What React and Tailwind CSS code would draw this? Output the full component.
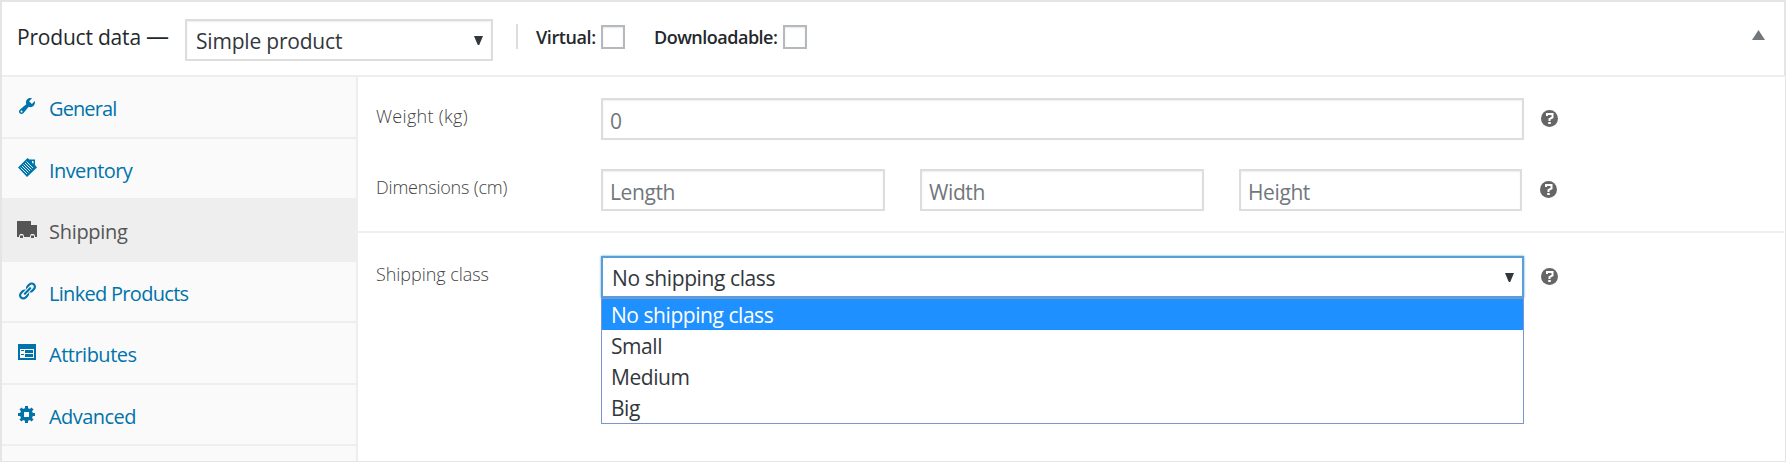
import React, { useState } from 'react';

const toolsPath =
  'M16.68 9.77a4.543 4.543 0 0 1-4.95.99l-5.41 6.52c-.99.99-2.59.99-3.58 0s-.99-2.59 0-3.57l6.52-5.42c-.68-1.65-.35-3.61.99-4.95 1.28-1.28 3.12-1.62 4.72-1.06l-2.89 2.89 2.82 2.82 2.86-2.87c.53 1.58.18 3.39-1.08 4.65zM3.81 16.21c.4.39 1.04.39 1.43 0 .4-.4.4-1.04 0-1.43-.39-.4-1.03-.4-1.43 0a1.02 1.02 0 0 0 0 1.43z';
const linkPath =
  'M17.74 2.76a4.321 4.321 0 0 1 0 6.1l-1.53 1.52c-1.12 1.12-2.7 1.47-4.14 1.09l2.62-2.61.76-.77.76-.76c.84-.84.84-2.2 0-3.04a2.13 2.13 0 0 0-3.04 0l-.77.76-3.38 3.38c-.37-1.44-.02-3.02 1.1-4.14l1.52-1.53a4.321 4.321 0 0 1 6.1 0zM8.59 13.43l5.34-5.34c.42-.42.42-1.1 0-1.52-.44-.43-1.13-.39-1.53 0l-5.33 5.34c-.42.42-.42 1.1 0 1.52.44.43 1.13.39 1.52 0zm-.76 2.29l4.14-4.15c.38 1.44.03 3.02-1.09 4.14l-1.52 1.53a4.321 4.321 0 0 1-6.1 0 4.321 4.321 0 0 1 0-6.1l1.53-1.52c1.12-1.12 2.7-1.47 4.14-1.1l-4.14 4.15c-.85.84-.85 2.2 0 3.05.84.84 2.2.84 3.04 0z';
const gearPath =
  'M18 12h-2.18c-.17.7-.44 1.35-.81 1.93l1.54 1.54-2.1 2.1-1.54-1.54c-.58.36-1.23.63-1.91.79V19H8v-2.18c-.68-.16-1.33-.43-1.91-.79l-1.54 1.54-2.12-2.12 1.54-1.54c-.36-.58-.63-1.23-.79-1.91H1V9.03h2.17c.16-.7.44-1.35.8-1.94L2.43 5.55l2.1-2.1 1.54 1.54c.58-.37 1.24-.64 1.93-.81V2h3v2.18c.68.16 1.33.43 1.91.79l1.54-1.54 2.12 2.12-1.54 1.54c.36.59.64 1.24.8 1.94H18V12zM7 8v5h5V8z';

const icons = {
  tools: <path fillRule="evenodd" d={toolsPath} />,
  link: <path d={linkPath} />,
  gear: <path fillRule="evenodd" d={gearPath} />,
  ticket: (
    <>
      <path fillRule="evenodd" d="M10.500 0l2 1.500h5.500v5.500l2 2.500-10 9.500-9-9.500zM15 3v1.500l1.500 1.500V3z" />
      <path
        d="M3.500 9.500l6.500 6.500M5 8l6.500 6.500M6.500 6.500l6.500 6.500M8 5l6.500 6.500M9.500 3.500l6.500 6.500"
        fill="none"
        stroke="#fafafa"
        strokeWidth="0.9"
      />
    </>
  ),
  truck: (
    <>
      <path d="M0 2h14v4h6v12H0z" />
      <path d="M2 18v-1l1-2h3l1 2v1zM13 18v-1l1-2h3l1 2v1z" fill="#eee" />
      <path d="M3 16.500h3V19H3zM14 16.500h3V19h-3z" />
    </>
  ),
  list: (
    <path
      fillRule="evenodd"
      d="M1 2h18v16H1zM3 7v9h14V7zM4 8h3v1H4zM8 8h8v3H8zM4 12h3v1H4zM8 12h8v3H8z"
    />
  ),
};

const tabs = [
  { id: 'general', label: 'General', icon: 'tools', size: 'h-[62px] border-b-2', text: 'tracking-[-0.9px]' },
  { id: 'inventory', label: 'Inventory', icon: 'ticket', size: 'h-[59px]', text: 'tracking-[-0.6px]' },
  { id: 'shipping', label: 'Shipping', icon: 'truck', size: 'h-[64px] pt-[2px]', text: 'tracking-[-0.3px]' },
  { id: 'linked', label: 'Linked Products', icon: 'link', size: 'h-[61px] border-b-2', text: 'tracking-[-0.7px]' },
  { id: 'attributes', label: 'Attributes', icon: 'list', size: 'h-[62px] border-b-2', text: 'tracking-[-0.5px]' },
  { id: 'advanced', label: 'Advanced', icon: 'gear', size: 'h-[61px] border-b-2', text: 'tracking-[-0.55px]' },
];

const shippingClasses = ['No shipping class', 'Small', 'Medium', 'Big'];

function Arrow() {
  return (
    <svg width="9" height="9" viewBox="0 0 9 9" fill="#32373c">
      <path d="M0 0h9L5.2 9H3.8z" />
    </svg>
  );
}

function HelpTip({ className }) {
  return (
    <svg className={className} width="17" height="17" viewBox="0 0 17 17">
      <circle cx="8.5" cy="8.5" r="8.5" fill="#666" />
      <path d="M6 6V4h5.500v3.500L8.500 9v2M7.200 13h2.600" fill="none" stroke="#fff" strokeWidth="2" />
    </svg>
  );
}

function Tab({ tab, active, onClick }) {
  return (
    <li
      onClick={onClick}
      className={`flex cursor-pointer border-[#eee] pl-[15px] ${tab.size} ${active ? 'bg-[#eee] text-[#555]' : 'text-[#0073aa]'}`}
    >
      <svg className="mt-[19px] shrink-0" width="20" height="20" viewBox="0 0 20 20" fill="currentColor">
        {icons[tab.icon]}
      </svg>
      <span className={`ml-3 pt-[18px] text-[20px] leading-[28px] ${tab.text}`}>{tab.label}</span>
    </li>
  );
}

function Field({ placeholder, className }) {
  return (
    <input
      type="text"
      placeholder={placeholder}
      className={`h-[42px] border-2 border-[#ddd] bg-white pt-[3px] pr-2 pl-[7px] text-[21px] tracking-[-0.4px] shadow-[inset_0_1px_2px_rgba(0,0,0,0.07)] outline-none placeholder:text-[#72777c] ${className}`}
    />
  );
}

function App() {
  const [current, setCurrent] = useState('shipping');
  const [shippingClass, setShippingClass] = useState(shippingClasses[0]);

  return (
    <div className="flex h-[462px] w-[1786px] flex-col overflow-hidden border-t-2 border-b border-l-2 border-[#e5e5e5] bg-white font-['Open_Sans',sans-serif] text-[#23282d]">
      {/* Header */}
      <div className="flex h-[75px] shrink-0 items-start border-r-2 border-b-2 border-r-[#e5e5e5] border-b-[#eee] pl-[15px]">
        <h2 className="w-[168px] pt-[19px] text-[21px] leading-[30px] whitespace-nowrap tracking-[-0.2px]">
          Product data <span className="text-[23px]">—</span>
        </h2>
        <div className="mt-[17px] flex h-[42px] w-[308px] items-center justify-between border-2 border-[#ddd] pr-2 pl-[9px] text-[#32373c] shadow-[inset_0_1px_2px_rgba(0,0,0,0.07)]">
          <span className="pt-[2px] text-[21px] leading-[30px] tracking-[-0.2px]">Simple product</span>
          <Arrow />
        </div>
        <div className="mt-[22px] ml-[23px] h-[25px] w-[2px] bg-[#ddd]" />
        <label className="ml-[18px] flex w-[118px] pt-[23px] text-[18px] leading-[25px] font-semibold">
          <span className="w-[65px] whitespace-nowrap tracking-[-0.4px]">Virtual:</span>
          <span className="h-6 w-6 border-2 border-[#b4b9be] bg-white shadow-[inset_0_1px_2px_rgba(0,0,0,0.1)]" />
        </label>
        <label className="flex pt-[23px] text-[18px] leading-[25px] font-semibold">
          <span className="w-[129px] whitespace-nowrap tracking-[-0.5px]">Downloadable:</span>
          <span className="h-6 w-6 border-2 border-[#b4b9be] bg-white shadow-[inset_0_1px_2px_rgba(0,0,0,0.1)]" />
        </label>
        <svg className="mt-[28px] mr-[19px] ml-auto" width="13" height="10" viewBox="0 0 13 10" fill="#72777c">
          <path d="M6.500 0L13 10H0z" />
        </svg>
      </div>

      <div className="flex flex-1 border-r border-[#e5e5e5]">
        <ul className="w-[356px] shrink-0 border-r-2 border-[#eee] bg-[#fafafa]">
          {tabs.map((tab) => (
            <Tab key={tab.id} tab={tab} active={tab.id === current} onClick={() => setCurrent(tab.id)} />
          ))}
        </ul>

        <div className="flex-1 pr-px">
          <div className="h-[156px] border-b-2 border-[#eee] pt-[21px] pl-[18px] text-[#444]">
            <div className="flex h-[71px] items-start">
              <label className="w-[225px] pt-[6px] text-[18px] leading-[25px] font-light tracking-[0.3px]">Weight (kg)</label>
              <Field placeholder="0" className="w-[923px]" />
              <HelpTip className="mt-3 ml-[17px]" />
            </div>
            <div className="flex items-start">
              <label className="w-[225px] pt-[6px] text-[18px] leading-[25px] font-light tracking-[-0.2px]">Dimensions (cm)</label>
              <Field placeholder="Length" className="mr-[35px] w-[284px]" />
              <Field placeholder="Width" className="mr-[35px] w-[284px]" />
              <Field placeholder="Height" className="w-[283px]" />
              <HelpTip className="mt-3 ml-[18px]" />
            </div>
          </div>

          <div className="flex items-start pt-[23px] pl-[18px]">
            <label className="w-[225px] pt-[6px] text-[18px] leading-[25px] font-light tracking-[-0.05px] text-[#444]">Shipping class</label>
            <div className="w-[923px] text-[21px] text-[#32373c]">
              <div className="flex h-[42px] items-center justify-between border-2 border-[#5b9dd9] pr-2 pl-[9px] shadow-[0_0_2px_rgba(30,140,190,0.8)]">
                <span className="pt-[2px] leading-[30px] tracking-[-0.4px]">{shippingClass}</span>
                <Arrow />
              </div>
              <ul className="relative border border-[#7a96cf] bg-white">
                {shippingClasses.map((name) => (
                  <li
                    key={name}
                    onClick={() => setShippingClass(name)}
                    className={`h-[31px] pl-[9px] leading-[33px] tracking-[-0.45px] ${name === shippingClass ? 'bg-[#1e90ff] text-white' : ''}`}
                  >
                    {name}
                  </li>
                ))}
              </ul>
            </div>
            <HelpTip className="mt-3 ml-[17px]" />
          </div>
        </div>
      </div>
    </div>
  );
}

export default App;
